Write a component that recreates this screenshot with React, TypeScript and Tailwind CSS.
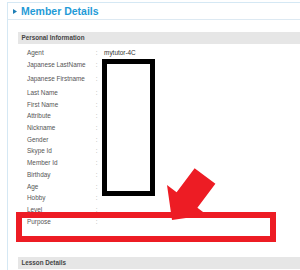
const rows: { label: string; value?: string; h: string }[] = [
  { label: 'Agent', value: 'mytutor-4C', h: 'h-[12px]' },
  { label: 'Japanese LastName', h: 'h-[12.6px]' },
  { label: 'Japanese Firstname', h: 'h-[15.4px]' },
  { label: 'Last Name', h: 'h-[12px]' },
  { label: 'First Name', h: 'h-[11.7px]' },
  { label: 'Attribute', h: 'h-[11.7px]' },
  { label: 'Nickname', h: 'h-[11.7px]' },
  { label: 'Gender', h: 'h-[11.7px]' },
  { label: 'Skype Id', h: 'h-[11.7px]' },
  { label: 'Member Id', h: 'h-[11.7px]' },
  { label: 'Birthday', h: 'h-[11.7px]' },
  { label: 'Age', h: 'h-[11.7px]' },
  { label: 'Hobby', h: 'h-[11.7px]' },
  { label: 'Level', h: 'h-[11.7px]' },
];

function SectionBar({ title }: { title: string }) {
  return (
    <div className="h-[12.6px] bg-[#e6e6e6] flex items-center pl-[4px] text-[6.3px] font-bold text-[#444]">
      {title}
    </div>
  );
}

function Row({ label, value, h }: { label: string; value?: string; h: string }) {
  return (
    <div className={`${h} flex items-center text-[6.4px]`}>
      <span className="w-[78.3px] shrink-0 pl-[9.5px] text-[#555]">{label}</span>
      <span className="w-[8.3px] shrink-0 text-[#aaa]">:</span>
      <span className="text-[#333]">{value}</span>
    </div>
  );
}

export default function App() {
  return (
    <div
      className="relative w-[300px] h-[270px] overflow-hidden bg-white"
      style={{ fontFamily: '"Liberation Sans", Arial, sans-serif' }}
    >
      <div className="ml-[6.5px] mt-[2px] h-[300px] border-l border-t border-[#d5e8f4]">
        {/* header */}
        <div className="h-[17px] flex items-center border-b border-[#dde9f2]">
          <svg width="4" height="5" viewBox="0 0 4 5" className="ml-[5px]">
            <path d="M0 0 L4 2.5 L0 5 Z" fill="#1f7fb5" />
          </svg>
          <span className="ml-[4.5px] text-[10.5px] font-bold text-[#1f9bd7] leading-none">
            Member Details
          </span>
        </div>

        <div className="pl-[10px] pt-[11.7px]">
          <SectionBar title="Personal Information" />
          <div className="pt-[2.4px]">
            {rows.map((r) => (
              <Row key={r.label} {...r} />
            ))}
            <div className="h-[22px] flex items-start pt-[1.6px] text-[6.4px]">
              <span className="w-[78.3px] shrink-0 pl-[9.5px] text-[#555]">Purpose</span>
              <span className="w-[8.3px] shrink-0 text-[#aaa]">:</span>
            </div>
          </div>
          <div className="mt-[19px]">
            <SectionBar title="Lesson Details" />
          </div>
        </div>
      </div>

      {/* annotations */}
      <div className="absolute left-[102px] top-[59px] w-[53px] h-[137px] border-[5.5px] border-black" />
      <div className="absolute left-[16px] top-[212px] w-[260px] h-[30px] border-[6px] border-[#ed1c24]" />
      <svg className="absolute left-0 top-0" width="300" height="270" viewBox="0 0 300 270">
        <polygon
          points="172,220 207,215 197.4,207.8 215.4,183.8 194.6,168.2 176.6,192.2 167,185"
          fill="#ed1c24"
        />
      </svg>
    </div>
  );
}
